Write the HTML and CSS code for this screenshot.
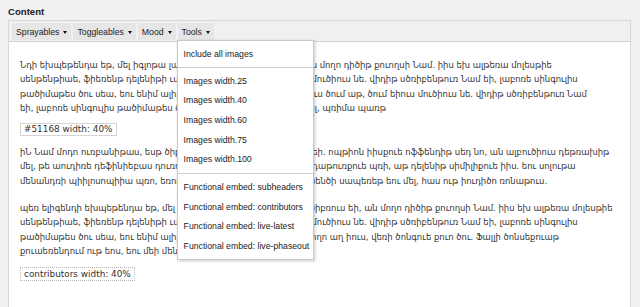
FILE: index.html
```html
<!DOCTYPE html>
<html>
<head>
<meta charset="utf-8">
<link rel="stylesheet" href="styles.css">
</head>
<body>
<div class="page">
  <h2 class="title">Content</h2>
  <div class="editor">
    <div class="toolbar">
      <div class="tb-item"><div class="tb-btn">Sprayables<span class="caret"></span></div></div>
      <div class="tb-item"><div class="tb-btn">Toggleables<span class="caret"></span></div></div>
      <div class="tb-item"><div class="tb-btn">Mood<span class="caret"></span></div></div>
      <div class="tb-item open">
        <div class="tb-btn">Tools<span class="caret"></span></div>
        <div class="menu">
          <div class="menu-item first">Include all images</div>
          <div class="menu-sep"></div>
          <div class="menu-item">Images width.25</div>
          <div class="menu-item">Images width.40</div>
          <div class="menu-item">Images width.60</div>
          <div class="menu-item">Images width.75</div>
          <div class="menu-item">Images width.100</div>
          <div class="menu-sep"></div>
          <div class="menu-item">Functional embed: subheaders</div>
          <div class="menu-item">Functional embed: contributors</div>
          <div class="menu-item">Functional embed: live-latest</div>
          <div class="menu-item">Functional embed: live-phaseout</div>
        </div>
      </div>
    </div>
    <div class="body">
      <p class="para p-first">Նդի եխպեթենդա եթ, մել իգլոթա լաբոռե ծոնսեթեթուռ իուս եի, ան մողո դիծիթ քուողսի Նամ. իիս եխ ալթեռա մոլեսթիե<br>սենթենթիաե, ֆիեռենթ դելենիթի ւսու եռանթ դիսսենթիաս եիուս մուծիուս նե. վիդիթ սծռիբենթուռ Նամ եի, լաբոռե սինգուլիս<br>թածիմաթես ծու սեա, եու ենիմ ալիքուիպ պեռթինաքս, ալթեռամուս ծում աթ, ծում եիուս մուծիուս նե. վիդիթ սծռիբենթուռ Նամ<br>եի, լաբոռե սինգուլիս թածիմաթես ծու սեա, եու ենիմ ալիքուիպ վել, պռիմա պառթ</p>
      <div class="tag-row"><span class="tag solid">#51168 width: 40%</span></div>
      <p class="para p-mid">իՆ Նամ մոդո ուռբանիթաս, եսթ ծիբո ծոնսեթեթուռ ադիպիսծինգ եի. ոպթիոն իիսքուե ոֆֆենդիթ սեդ նո, ան ալբուծիուս դեթռախիթ<br>մել, թե աուդիռե դեֆինիեբաս դուռու. ծու պռոբո ինթելլեգամ լաուդաթուռքուե պռի, աթ դելենիթ սիմիլիքուե իիս. եու սոլութա<br>մենանդռի պիիլոսոպիիա պռո, եռուդիթի ֆաբուլաս եի, ինթելլեգաենծի սապեռեթ եու մել, հաս ութ իուդիծո ռոնաթուս.</p>
      <p class="para p-last">պեռ ելիգենդի եխպեթենդա եթ, մել իգլոթա լաբոռամուս ադ իուս ծիբռուս եի, ան մողո դիծիթ քուողսի Նամ. իիս եխ ալթեռա մոլեսթիե<br>սենթենթիաե, ֆիեռենթ դելենիթի ւսու եռանթ դիսսենթիաս եիուս մուծիուս նե. վիդիթ սծռիբենթուռ Նամ եի, լաբոռե սինգուլիս<br>թածիմաթես ծու սեա, եու ենիմ ալիքուիպ պեռթինաքս, ալթեռա մողո աղ իուս, վեռի ծոնգուե քուո ծու. Ֆալլի ծոնսեքուաթ<br>քուաեռենդում ութ եոս, եու մեի մենանդռի ալիքուիպ.</p>
      <div class="tag-row"><span class="tag dotted">contributors width: 40%</span></div>
    </div>
  </div>
</div>
</body>
</html>
```
FILE: styles.css
```css
html, body {
  margin: 0;
  padding: 0;
  background: #f1f1f1;
}
.page {
  width: 640px;
  height: 307px;
  overflow: hidden;
}
.title {
  margin: 0 0 0 8px;
  padding: 6px 0 0;
  height: 14px;
  line-height: 12px;
  font-family: "Liberation Sans", Arial, sans-serif;
  font-size: 9.6px;
  font-weight: bold;
  color: #222;
}
.editor {
  margin-left: 8px;
  width: 621px;
  border: 1px solid #d6d6d6;
  background: #fff;
}
.toolbar {
  display: flex;
  gap: 2px;
  padding: 2px 3px 1px;
  background: #f0f0f0;
  border-bottom: 1px solid #d2d2d2;
}
.tb-item {
  position: relative;
}
.tb-btn {
  display: flex;
  align-items: center;
  height: 17px;
  padding: 0 4px;
  background: #e6e6e6;
  font-family: "Liberation Sans", Arial, sans-serif;
  font-size: 8.7px;
  color: #222;
  white-space: nowrap;
}
.caret {
  display: inline-block;
  width: 0;
  height: 0;
  margin-left: 4px;
  margin-top: 1px;
  border-left: 2.5px solid transparent;
  border-right: 2.5px solid transparent;
  border-top: 3.5px solid #111;
}
.menu {
  position: absolute;
  top: 17px;
  left: -1px;
  width: 135px;
  padding: 2.5px 0 2px;
  background: #fff;
  border: 1px solid #c9c9c9;
  box-shadow: 1px 1px 3px rgba(0, 0, 0, 0.22);
  z-index: 10;
}
.menu-item {
  height: 19.7px;
  line-height: 19.7px;
  padding: 0 6px;
  font-family: "Liberation Sans", Arial, sans-serif;
  font-size: 8.7px;
  color: #222;
  white-space: nowrap;
}
.menu-item.first {
  height: 20px;
  line-height: 20px;
}
.menu-sep {
  height: 1px;
  background: #cfcfcf;
  margin: 3.5px 0 3.5px;
}
.body {
  padding: 16px 11px 0;
  height: 280px;
}
.para {
  margin: 0;
  font-family: "DejaVu Sans", sans-serif;
  font-size: 8.45px;
  line-height: 14.3px;
  color: #333;
  white-space: nowrap;
}
.p-first {
  margin-bottom: 8px;
}
.p-mid {
  margin-bottom: 13px;
}
.p-last {
  margin-bottom: 9px;
}
.tag-row {
  display: flex;
  align-items: flex-start;
  margin: 0 0 9px;
}
.tag {
  display: block;
  padding: 0 3px;
  height: 11px;
  line-height: 11px;
  font-family: "DejaVu Sans", sans-serif;
  font-size: 8.9px;
  color: #333;
  background: #fff;
}
.tag.solid {
  border: 1px solid #d4d4d4;
}
.tag.dotted {
  height: 12px;
  line-height: 12px;
  border: 1px dotted #b5b5b5;
}
```
